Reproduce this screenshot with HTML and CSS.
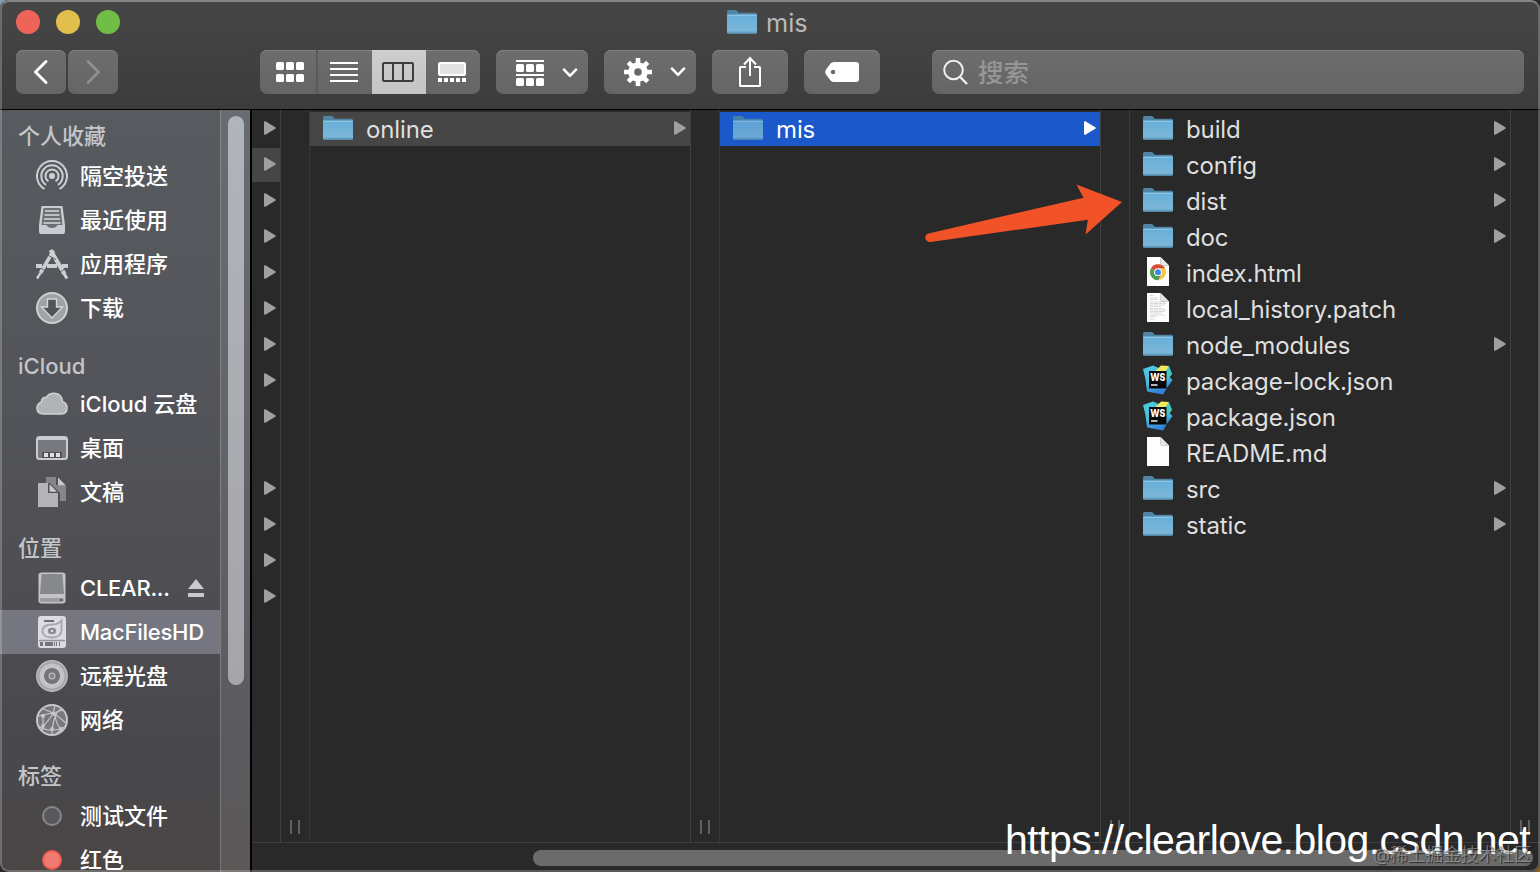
FILE: index.html
```
<!DOCTYPE html>
<html lang="zh-CN">
<head>
    <meta charset="UTF-8">
    <meta name="viewport" content="width=device-width, initial-scale=1.0">
    <title>mis</title>
    <link rel="stylesheet" href="styles.css">
</head>
<body>

<!-- Shared icons -->
<svg class="symbols" width="0" height="0">
    <defs>
        <linearGradient id="folderFill" x1="0" y1="0" x2="0" y2="1">
            <stop offset="0" stop-color="#67aed9"/>
            <stop offset="0.85" stop-color="#7bb7d8"/>
            <stop offset="1" stop-color="#649fc1"/>
        </linearGradient>
        <linearGradient id="wsFill" x1="0" y1="0" x2="0.3" y2="1">
            <stop offset="0" stop-color="#4fc8dc"/>
            <stop offset="0.6" stop-color="#45c2e0"/>
            <stop offset="1" stop-color="#3580da"/>
        </linearGradient>
    </defs>
    <symbol id="folder" viewBox="0 0 30 24">
        <path d="M0 1.500Q0 0 1.500 0H8.500Q9.500 0 10.200 1L11.500 2.800H28.500Q30 2.800 30 4.300V8H0Z" fill="#4f86a6"/>
        <path d="M0 4.700H30V22.500Q30 23.700 28.800 23.700H1.200Q0 23.700 0 22.500Z" fill="url(#folderFill)"/>
        <path d="M0.500 5.200H29.500" stroke="#9bd0ec" stroke-width="1"/>
        <path d="M0.500 22.300H29.500" stroke="#5a93b3" stroke-width="0.600"/>
    </symbol>
    <symbol id="arrow" viewBox="0 0 12 14">
        <path d="M0 1.200Q0 -0.300 1.400 0.300L11.300 6.200Q12.300 7 11.300 7.800L1.400 13.700Q0 14.300 0 12.800Z" fill="currentColor"/>
    </symbol>
    <symbol id="page" viewBox="0 0 22 29">
        <path d="M0 0H13.500L22 8.500V29H0Z" fill="#fdfdfd"/>
        <path d="M13.500 0V7.300Q13.500 8.500 14.700 8.500H22Z" fill="#e4e4e4"/>
        <path d="M13.500 0V7.500Q13.500 8.500 14.700 8.500H22" fill="none" stroke="#c3c3c3" stroke-width="0.700"/>
    </symbol>
    <symbol id="chrome" viewBox="0 0 22 29">
        <use href="#page" width="22" height="29"/>
        <circle cx="11" cy="15.200" r="8" fill="#f7c846"/>
        <path d="M11 15.200L4.070 11.200A8 8 0 0 1 17.930 11.200Z" fill="#d7493a"/>
        <path d="M11 15.200L4.070 11.200A8 8 0 0 0 11 23.200L14.400 17.200Z" fill="#4d9e58"/>
        <path d="M11 11.200H17.930A8 8 0 0 1 18.800 13L14.500 13.600Z" fill="#f7c846"/>
        <circle cx="11" cy="15.200" r="3.900" fill="#fff"/>
        <circle cx="11" cy="15.200" r="3" fill="#4484e8"/>
    </symbol>
    <symbol id="patch" viewBox="0 0 22 29">
        <use href="#page" width="22" height="29"/>
        <g stroke="#b5b5b5" stroke-width="0.500" stroke-dasharray="3 0.400 5 0.500">
            <path d="M3 2.500H7M3 5H12M3 6.500H10M3 9H18M3 10.500H19M3 12H18M3 13.500H14M3 15.500H17M3 17H19M3 18.500H18M3 20H15M3 22H18M3 23.500H9M3 26H8"/>
        </g>
    </symbol>
    <symbol id="webstorm" viewBox="0 0 30 30">
        <path d="M0 4L10 0.500L18 4L25 2L29 9L26.500 12L29.500 15L24.500 22L20 29.500L4 26.500L2.500 14Z" fill="url(#wsFill)"/>
        <path d="M11.500 7L18 0.500L26 1L24.500 7Z" fill="#f2ea5a"/>
        <path d="M22 7L26 1L29 9L26.500 12L23 14Z" fill="#49c9c4"/>
        <rect x="6" y="6" width="17.500" height="17.500" fill="#080808"/>
        <text x="7.300" y="15.800" class="ws-text" textLength="15" lengthAdjust="spacingAndGlyphs">WS</text>
        <rect x="8" y="19.300" width="6.500" height="1.400" fill="#fff"/>
    </symbol>
    <symbol id="chevron" viewBox="0 0 16 10">
        <path d="M2 1.700L8 7.800L14 1.700" fill="none" stroke="#fff" stroke-width="2.600" stroke-linecap="round" stroke-linejoin="round"/>
    </symbol>
</svg>

<div class="window">
    <header class="toolbar">
        <div class="title-row">
            <div class="lights">
                <span class="light red"></span>
                <span class="light yellow"></span>
                <span class="light green"></span>
            </div>
            <div class="title">
                <svg class="folder-icon"><use href="#folder"/></svg>
                <span>mis</span>
            </div>
        </div>
        <div class="tool-row">
            <div class="nav">
                <button class="btn nav-btn"><svg width="50" height="44"><path d="M30 11.500L19.500 22L30 32.500" fill="none" stroke="#fff" stroke-width="3" stroke-linecap="round" stroke-linejoin="round"/></svg></button>
                <button class="btn nav-btn"><svg width="50" height="44"><path d="M20 11.500L30.500 22L20 32.500" fill="none" stroke="#909090" stroke-width="2.600" stroke-linecap="round" stroke-linejoin="round"/></svg></button>
            </div>
            <div class="btn views">
                <span class="view first">
                    <svg width="28" height="20" fill="#fff">
                        <rect width="8" height="8" rx="1.500"/><rect x="10" width="8" height="8" rx="1.500"/><rect x="20" width="8" height="8" rx="1.500"/>
                        <rect y="12" width="8" height="8" rx="1.500"/><rect x="10" y="12" width="8" height="8" rx="1.500"/><rect x="20" y="12" width="8" height="8" rx="1.500"/>
                    </svg>
                </span>
                <span class="view">
                    <svg width="28" height="20" fill="#fff"><path d="M0 0H28V2H0ZM0 6H28V8H0ZM0 12H28V14H0ZM0 18H28V20H0Z"/></svg>
                </span>
                <span class="view active">
                    <svg width="32" height="20" fill="none" stroke="#3d3d3f" stroke-width="2"><rect x="1" y="1" width="30" height="18" rx="1"/><path d="M11 1V19M21 1V19"/></svg>
                </span>
                <span class="view">
                    <svg width="28" height="20"><rect x="1" y="1" width="26" height="12" rx="1" fill="#e2e2e2" stroke="#fff" stroke-width="2"/><path d="M0 18H28" stroke="#fff" stroke-width="4" stroke-dasharray="4 2"/></svg>
                </span>
            </div>
            <button class="btn menu-btn">
                <svg width="28" height="26" fill="#fff">
                    <rect width="28" height="2"/><rect y="14" width="28" height="2"/>
                    <rect y="4" width="8" height="8" rx="1.500"/><rect x="10" y="4" width="8" height="8" rx="1.500"/><rect x="20" y="4" width="8" height="8" rx="1.500"/>
                    <rect y="18" width="8" height="8" rx="1.500"/><rect x="10" y="18" width="8" height="8" rx="1.500"/><rect x="20" y="18" width="8" height="8" rx="1.500"/>
                </svg>
                <svg class="chevron"><use href="#chevron"/></svg>
            </button>
            <button class="btn menu-btn gear">
                <svg width="28" height="28" viewBox="-14 -14 28 28">
                    <g stroke="#fff" stroke-width="4.600"><path d="M0 -14V-8M0 8V14M-14 0H-8M8 0H14M-9.700 -9.700L-5.500 -5.500M5.500 5.500L9.700 9.700M9.700 -9.700L5.500 -5.500M-5.500 5.500L-9.700 9.700"/></g>
                    <circle r="6.800" fill="none" stroke="#fff" stroke-width="6"/>
                </svg>
                <svg class="chevron"><use href="#chevron"/></svg>
            </button>
            <button class="btn wide">
                <svg width="24" height="32" fill="none" stroke="#fff" stroke-width="2">
                    <path d="M8 11H2.500Q2 11 2 11.500V29.500Q2 30 2.500 30H21.500Q22 30 22 29.500V11.500Q22 11 21.500 11H16"/>
                    <path d="M12 20V2M6 8.500L12 2L18 8.500"/>
                </svg>
            </button>
            <button class="btn wide tag">
                <svg width="34" height="20"><path fill="#fff" fill-rule="evenodd" d="M9 0H31Q34 0 34 3V17Q34 20 31 20H9Q7 20 5.500 18.500L1 12.500Q-0.500 10 1 7.500L5.500 1.500Q7 0 9 0ZM8 7.800A2.200 2.200 0 1 0 8 12.200A2.200 2.200 0 1 0 8 7.800Z"/></svg>
            </button>
            <div class="btn search">
                <svg width="25" height="26" fill="none" stroke="#f0f0f0" stroke-width="2"><circle cx="10.500" cy="11" r="9.300"/><path d="M17.200 18L24 25" stroke-width="2.400"/></svg>
                <span>搜索</span>
            </div>
        </div>
    </header>

    <div class="main">
        <nav class="sidebar">
            <div class="places">
                <h4 class="first-heading">个人收藏</h4>
                <div class="place">
                    <svg class="place-icon" viewBox="-16 -16 32 32" fill="none" stroke="#cdd0d4" stroke-width="2">
                        <path d="M-7.500 13A15 15 0 1 1 7.500 13"/><path d="M-6 8.900A10.700 10.700 0 1 1 6 8.900" /><path d="M-3.600 5.400A6.500 6.500 0 1 1 3.600 5.400"/><circle r="2" fill="#cdd0d4"/>
                    </svg>
                    <span>隔空投送</span>
                </div>
                <div class="place">
                    <svg class="place-icon" viewBox="0 0 32 32">
                        <path d="M5.500 2H26.500L29 21V28Q29 30 27 30H5Q3 30 3 28V21Z" fill="#c9ccd0"/>
                        <path d="M7.500 4H24.500L26.500 21H21.500Q20 24 16 24Q12 24 10.500 21H5.500Z" fill="#6c7075"/>
                        <path d="M9 7H23M8.500 11H23.500M8 15H24M7.500 19H24.500" stroke="#d6d8dc" stroke-width="1.600"/>
                    </svg>
                    <span>最近使用</span>
                </div>
                <div class="place">
                    <svg class="place-icon" viewBox="0 0 32 32" stroke="#cbced2" fill="none">
                        <path d="M0 18H6M11 18H21M26 18H32" stroke-width="4"/>
                        <path d="M17.500 2.500L4.500 25" stroke-width="3.600"/>
                        <path d="M14.500 2L28.500 26" stroke-width="4.200"/>
                        <path d="M4.500 25L1 30.500" stroke-width="2.400"/>
                        <path d="M27 24L31 30.500" stroke-width="3"/>
                        <path d="M11.500 7L20 11.500M5 20L9.500 23M23 24.500L29 21" stroke="#55595e" stroke-width="0.900"/>
                    </svg>
                    <span>应用程序</span>
                </div>
                <div class="place">
                    <svg class="place-icon" viewBox="0 0 32 32">
                        <circle cx="16" cy="16" r="15" fill="#9fa2a6" stroke="#cdd0d3" stroke-width="2"/>
                        <path d="M11.500 7H20.500V15H26.500L16 26L5.500 15H11.500Z" fill="#515459" stroke="#d4d6d9" stroke-width="1.400"/>
                    </svg>
                    <span>下载</span>
                </div>

                <h4 class="latin">iCloud</h4>
                <div class="place">
                    <svg class="place-icon" viewBox="0 0 32 32"><path d="M7.500 26Q1 25.800 1 20Q1 15.500 5.300 14.200Q5.500 9.200 10.300 9.300Q13 5 18.500 5.200Q26 5.800 26.500 13.700Q31 15 31 20Q31 25.500 25.500 26Z" fill="#b1b3b8" stroke="#ced0d4" stroke-width="1.600"/></svg>
                    <span>iCloud 云盘</span>
                </div>
                <div class="place">
                    <svg class="place-icon" viewBox="0 0 32 32">
                        <rect x="1" y="5" width="30" height="22" rx="2.500" fill="#77797e" stroke="#cbccd1" stroke-width="2"/>
                        <path d="M2 6.500H30" stroke="#cbccd1" stroke-width="3"/>
                        <rect x="6" y="20" width="20" height="6" fill="#505156"/>
                        <path d="M8 23H24" stroke="#e0e0e4" stroke-width="4" stroke-dasharray="4 2"/>
                    </svg>
                    <span>桌面</span>
                </div>
                <div class="place">
                    <svg class="place-icon" viewBox="0 0 32 32">
                        <path d="M10 1H20V9L30 10V25H24V17L14 7H10Z" fill="#85868b"/>
                        <path d="M22 1.500V9.500H30Z" fill="#c8c9ce"/>
                        <path d="M2 7H12V17H22V31H2Z" fill="#b3b4b9"/>
                        <path d="M13.500 8V15.700H21Z" fill="#c8c9ce"/>
                    </svg>
                    <span>文稿</span>
                </div>

                <h4>位置</h4>
                <div class="place">
                    <svg class="place-icon" viewBox="0 0 32 32">
                        <rect x="2.500" y="0.500" width="27" height="31" rx="3" fill="#c4c5c9"/>
                        <path d="M5.500 2H26.500L28 22H4Z" fill="#87888c"/>
                        <rect x="4" y="26" width="24" height="4" rx="1" fill="#9c9da1"/><rect x="24" y="27" width="2" height="2" fill="#4c4c51"/>
                    </svg>
                    <span class="place-name">CLEAR...</span>
                    <svg class="eject" width="16" height="18" fill="#c9c9ce"><path d="M8 0L16 10H0Z"/><rect y="14" width="16" height="4"/></svg>
                </div>
                <div class="place selected">
                    <svg class="place-icon" viewBox="0 0 32 32">
                        <rect x="2" y="0" width="28" height="32" rx="3" fill="#dcdbe4"/>
                        <rect x="8" y="4" width="10" height="2" fill="#6c6b76"/>
                        <path d="M17 8.500Q22 8.500 25.500 4.500V14.500Q25 21.500 16 21.500Q6.500 21.500 6.500 15Q6.500 8.500 17 8.500Z" fill="none" stroke="#a5a4b0" stroke-width="1.800"/>
                        <ellipse cx="16" cy="15" rx="4.200" ry="3.200" fill="#8c8b98"/><circle cx="16" cy="15" r="1" fill="#fff"/>
                        <path d="M3 24.500H29" stroke="#92919d" stroke-width="1.500"/>
                        <path d="M4 28H7M9 28H17M18 28H19M20 28H21M23 28H24" stroke="#74737e" stroke-width="4"/>
                    </svg>
                    <span class="place-name">MacFilesHD</span>
                </div>
                <div class="place">
                    <svg class="place-icon" viewBox="-16 -16 32 32">
                        <circle r="15.300" fill="#a6a7ab" stroke="#bfc0c4" stroke-width="1.200"/><circle r="12.500" fill="#c3c3c8"/><circle r="8" fill="#747579"/><circle r="3.500" fill="#b9babe"/><circle r="2" fill="#626267"/><circle r="0.800" fill="#ddd"/>
                    </svg>
                    <span>远程光盘</span>
                </div>
                <div class="place">
                    <svg class="place-icon" viewBox="-16 -16 32 32" fill="none" stroke="#c6c6ca" stroke-width="1.200">
                        <circle r="15" fill="#77787c" stroke-width="2"/>
                        <path d="M-14 -4Q2 -7 11 -10M-9 -11Q2 -8 14 3M3 -15Q2 -4 -9 6M-9 -4Q-9 1 -9 6Q-9 10 -11 11M-14 6Q-2 14 13 7M3 -5Q4 4 9 9Q7 12 4 14M9 -11Q4 -8 2 0Q0 7 0 15"/>
                        <g fill="#c6c6ca" stroke="none"><circle cx="-9" cy="-4" r="2"/><circle cx="2" cy="-6" r="2"/><circle cx="-9" cy="6" r="1.900"/><circle cx="0" cy="9" r="1.900"/><circle cx="9" cy="9" r="2"/></g>
                    </svg>
                    <span>网络</span>
                </div>

                <h4>标签</h4>
                <div class="place"><span class="tag-dot"></span><span>测试文件</span></div>
                <div class="place"><span class="tag-dot tag-red"></span><span>红色</span></div>
            </div>
            <div class="side-track"><div class="side-thumb"></div></div>
        </nav>

        <div class="browser">
            <div class="columns">
                <div class="column narrow">
                    <div class="row"><svg class="arrow"><use href="#arrow"/></svg></div>
                    <div class="row current"><svg class="arrow"><use href="#arrow"/></svg></div>
                    <div class="row"><svg class="arrow"><use href="#arrow"/></svg></div>
                    <div class="row"><svg class="arrow"><use href="#arrow"/></svg></div>
                    <div class="row"><svg class="arrow"><use href="#arrow"/></svg></div>
                    <div class="row"><svg class="arrow"><use href="#arrow"/></svg></div>
                    <div class="row"><svg class="arrow"><use href="#arrow"/></svg></div>
                    <div class="row"><svg class="arrow"><use href="#arrow"/></svg></div>
                    <div class="row"><svg class="arrow"><use href="#arrow"/></svg></div>
                    <div class="row"></div>
                    <div class="row"><svg class="arrow"><use href="#arrow"/></svg></div>
                    <div class="row"><svg class="arrow"><use href="#arrow"/></svg></div>
                    <div class="row"><svg class="arrow"><use href="#arrow"/></svg></div>
                    <div class="row"><svg class="arrow"><use href="#arrow"/></svg></div>
                </div>
                <div class="gutter"><i></i><i></i></div>
                <div class="column">
                    <div class="row current"><svg class="folder-icon"><use href="#folder"/></svg><span>online</span><svg class="arrow"><use href="#arrow"/></svg></div>
                </div>
                <div class="gutter"><i></i><i></i></div>
                <div class="column">
                    <div class="row chosen"><svg class="folder-icon dim"><use href="#folder"/></svg><span>mis</span><svg class="arrow"><use href="#arrow"/></svg></div>
                </div>
                <div class="gutter"><i></i><i></i></div>
                <div class="column">
                    <div class="row"><svg class="folder-icon"><use href="#folder"/></svg><span>build</span><svg class="arrow"><use href="#arrow"/></svg></div>
                    <div class="row"><svg class="folder-icon"><use href="#folder"/></svg><span>config</span><svg class="arrow"><use href="#arrow"/></svg></div>
                    <div class="row"><svg class="folder-icon"><use href="#folder"/></svg><span>dist</span><svg class="arrow"><use href="#arrow"/></svg></div>
                    <div class="row"><svg class="folder-icon"><use href="#folder"/></svg><span>doc</span><svg class="arrow"><use href="#arrow"/></svg></div>
                    <div class="row"><svg class="file-icon"><use href="#chrome"/></svg><span>index.html</span></div>
                    <div class="row"><svg class="file-icon"><use href="#patch"/></svg><span>local_history.patch</span></div>
                    <div class="row"><svg class="folder-icon"><use href="#folder"/></svg><span>node_modules</span><svg class="arrow"><use href="#arrow"/></svg></div>
                    <div class="row"><svg class="ws-icon"><use href="#webstorm"/></svg><span>package-lock.json</span></div>
                    <div class="row"><svg class="ws-icon"><use href="#webstorm"/></svg><span>package.json</span></div>
                    <div class="row"><svg class="file-icon"><use href="#page"/></svg><span>README.md</span></div>
                    <div class="row"><svg class="folder-icon"><use href="#folder"/></svg><span>src</span><svg class="arrow"><use href="#arrow"/></svg></div>
                    <div class="row"><svg class="folder-icon"><use href="#folder"/></svg><span>static</span><svg class="arrow"><use href="#arrow"/></svg></div>
                </div>
                <div class="gutter last"><i></i><i></i></div>
            </div>
            <div class="bottom-track"><div class="bottom-thumb"></div></div>
        </div>
    </div>
    <div class="window-edge"></div>
</div>

<!-- Arrow pointing at dist -->
<svg class="pointer" width="198" height="60" viewBox="925 184 198 60">
    <path d="M928.500 233.500L1083.500 197.700L1076.500 184.500L1122 202L1085.600 234.500L1087.800 219.700L930.500 242Q926 242 925.300 238Q925 234.500 928.500 233.500Z" fill="#f15227"/>
</svg>
<div class="site-mark">https://clearlove.blog.csdn.net</div>
<div class="community-mark">@稀土掘金技术社区</div>

</body>
</html>
```
FILE: styles.css
```
* {
    box-sizing: border-box;
}
body {
    margin: 0;
    height: 100vh;
    overflow: hidden;
    background: linear-gradient(135deg, #8fa6c2 0, #2a2a2c 20px, #2a2a2c calc(100% - 14px), #a0691c 100%);
    font-family: Inter, "Noto Sans CJK SC", sans-serif;
}
svg {
    display: block;
    flex: none;
}
.symbols {
    position: absolute;
}
.window {
    display: flex;
    flex-direction: column;
    height: 872px;
    width: 1540px;
    border-radius: 9px;
    overflow: hidden;
    background-color: #292929;
}
.window-edge {
    position: absolute;
    left: 0;
    top: 0;
    width: 1540px;
    height: 872px;
    border: 2px solid rgba(255, 255, 255, 0.22);
    border-top-color: rgba(255, 255, 255, 0.34);
    border-radius: 9px;
    pointer-events: none;
}

/* Toolbar */
.toolbar {
    height: 110px;
    flex: none;
    background: linear-gradient(#464646, #3c3c3c);
    border-bottom: 1px solid #000;
}
.title-row {
    display: flex;
    height: 50px;
    padding: 10px 16px 0;
}
.lights {
    display: flex;
    gap: 16px;
    width: 711px;
}
.light {
    width: 24px;
    height: 24px;
    border-radius: 50%;
}
.red {
    background-color: #ee6459;
}
.yellow {
    background-color: #e2bf4c;
}
.green {
    background-color: #71be46;
}
.title {
    display: flex;
    gap: 9px;
    color: #b9b9b9;
    font-size: 25.3px;
    line-height: 26px;
}
.tool-row {
    display: flex;
    padding: 0 16px;
}
.btn {
    display: flex;
    align-items: center;
    height: 44px;
    padding: 0;
    border: none;
    border-radius: 7px;
    background: linear-gradient(#6d6d6e, #656566);
    box-shadow: inset 0 1px 0 #828283;
}
.nav {
    display: flex;
    gap: 2px;
    width: 244px;
}
.nav-btn {
    width: 50px;
}
.views {
    width: 220px;
    margin-right: 16px;
    overflow: hidden;
}
.view {
    display: flex;
    width: 54px;
    height: 44px;
    padding-right: 2px;
    align-items: center;
    justify-content: center;
}
.view.first {
    width: 58px;
    padding: 0 0 0 4px;
    border-right: 2px solid #5a5a5b;
}
.view.active {
    background: linear-gradient(#cecece, #c4c4c6);
}
.menu-btn {
    width: 92px;
    margin-right: 16px;
    padding: 2px 10px 0 20px;
    justify-content: space-between;
}
.menu-btn.gear {
    padding-top: 0;
}
.chevron {
    width: 16px;
    height: 10px;
}
.wide {
    width: 76px;
    margin-right: 16px;
    justify-content: center;
}
.wide.tag {
    margin-right: 52px;
}
.search {
    width: 592px;
    padding-left: 11px;
    gap: 10px;
    color: #969697;
    font-size: 25.5px;
    font-weight: 500;
}
.search span {
    margin-bottom: 3px;
}

/* Sidebar */
.main {
    display: flex;
    flex: 1;
    min-height: 0;
}
.sidebar {
    display: flex;
    width: 252px;
    flex: none;
    border-right: 2px solid #000;
    background: linear-gradient(#575b60 0, #525358 45%, #48484c 85%, #4b4545 100%);
    overflow: hidden;
}
.places {
    width: 220px;
}
.places h4 {
    height: 52px;
    margin: 0;
    padding: 18px 0 0 18px;
    color: #c3c5c9;
    font-size: 22px;
    font-weight: 500;
    line-height: 32px;
}
.places .first-heading {
    height: 44px;
    padding-top: 10px;
}
.places .latin {
    padding-top: 20px;
}
.place {
    display: flex;
    align-items: center;
    height: 44px;
    padding-left: 36px;
    gap: 12px;
    color: #fff;
    font-size: 22px;
    font-weight: 500;
    line-height: 44px;
    white-space: nowrap;
}
.place.selected {
    background-color: #75767f;
}
.place-icon {
    width: 32px;
    height: 32px;
}
.place-name {
    width: 96px;
    letter-spacing: -0.25px;
}
.tag-dot {
    width: 20px;
    height: 20px;
    margin: 0 6px;
    border: 2px solid #88878a;
    border-radius: 50%;
    background-color: #59585c;
}
.tag-dot.tag-red {
    border-color: #ee5a50;
    background-color: #f07b72;
}
.side-track {
    width: 30px;
    padding: 6px 6px 0 7px;
    border-left: 1px solid rgba(255, 255, 255, 0.2);
    background-color: rgba(255, 255, 255, 0.1);
}
.side-thumb {
    width: 16px;
    height: 569px;
    border-radius: 8px;
    background: linear-gradient(#b0b4bb, #a5a5aa);
}

/* Column view */
.browser {
    display: flex;
    flex-direction: column;
    flex: 1;
    min-width: 0;
}
.columns {
    display: flex;
    height: 732px;
}
.column {
    width: 380px;
    padding-top: 2px;
    flex: none;
}
.column.narrow {
    width: 28px;
}
.row {
    display: flex;
    align-items: center;
    height: 34px;
    margin-bottom: 2px;
    padding: 0 4px 0 13px;
    gap: 13px;
    color: #dfdfdf;
    font-size: 24px;
    line-height: 34px;
    letter-spacing: -0.13px;
}
.row span {
    padding-top: 2px;
}
.narrow .row {
    padding-left: 0;
}
.row.current {
    background-color: #464646;
}
.row.chosen {
    background-color: #1b59ca;
    color: #fff;
}
.arrow {
    width: 12px;
    height: 14px;
    margin: 0 0 2px auto;
    color: #a0a0a0;
}
.chosen .arrow {
    color: #fff;
}
.folder-icon {
    width: 30px;
    height: 24px;
}
.row .folder-icon {
    margin-bottom: 2px;
}
.folder-icon.dim {
    opacity: 0.85;
}
.file-icon {
    width: 22px;
    height: 29px;
    margin: 0 4px 3px;
}
.ws-icon {
    width: 30px;
    height: 30px;
    margin-bottom: 2px;
}
.ws-text {
    fill: #fff;
    font-family: Inter, sans-serif;
    font-size: 10.3px;
    font-weight: 800;
    letter-spacing: 0;
}
.gutter {
    display: flex;
    align-items: flex-end;
    width: 30px;
    padding: 0 0 8px 9px;
    gap: 6px;
    flex: none;
    border-left: 1px solid #414141;
    border-right: 1px solid #383838;
}
.gutter i {
    width: 2px;
    height: 14px;
    background-color: #606060;
}
.gutter.last {
    border-right: none;
}
.bottom-track {
    height: 30px;
    padding: 7px 7px 0 281px;
    border-top: 1px solid #3f3f3f;
}
.bottom-thumb {
    height: 16px;
    border-radius: 8px;
    background-color: #6b6b6b;
}

/* Overlays */
.pointer {
    position: absolute;
    left: 925px;
    top: 184px;
}
.site-mark {
    position: absolute;
    left: 1005px;
    top: 817px;
    color: #fff;
    font-family: "Liberation Sans", Arial, sans-serif;
    font-size: 41px;
    line-height: 46px;
    letter-spacing: -0.56px;
    white-space: nowrap;
}
.community-mark {
    position: absolute;
    left: 1373px;
    top: 842px;
    color: rgba(190, 190, 190, 0.5);
    font-size: 17.7px;
    line-height: 26px;
    text-shadow: 1px 1px 1px rgba(0, 0, 0, 0.6);
    white-space: nowrap;
}
```
